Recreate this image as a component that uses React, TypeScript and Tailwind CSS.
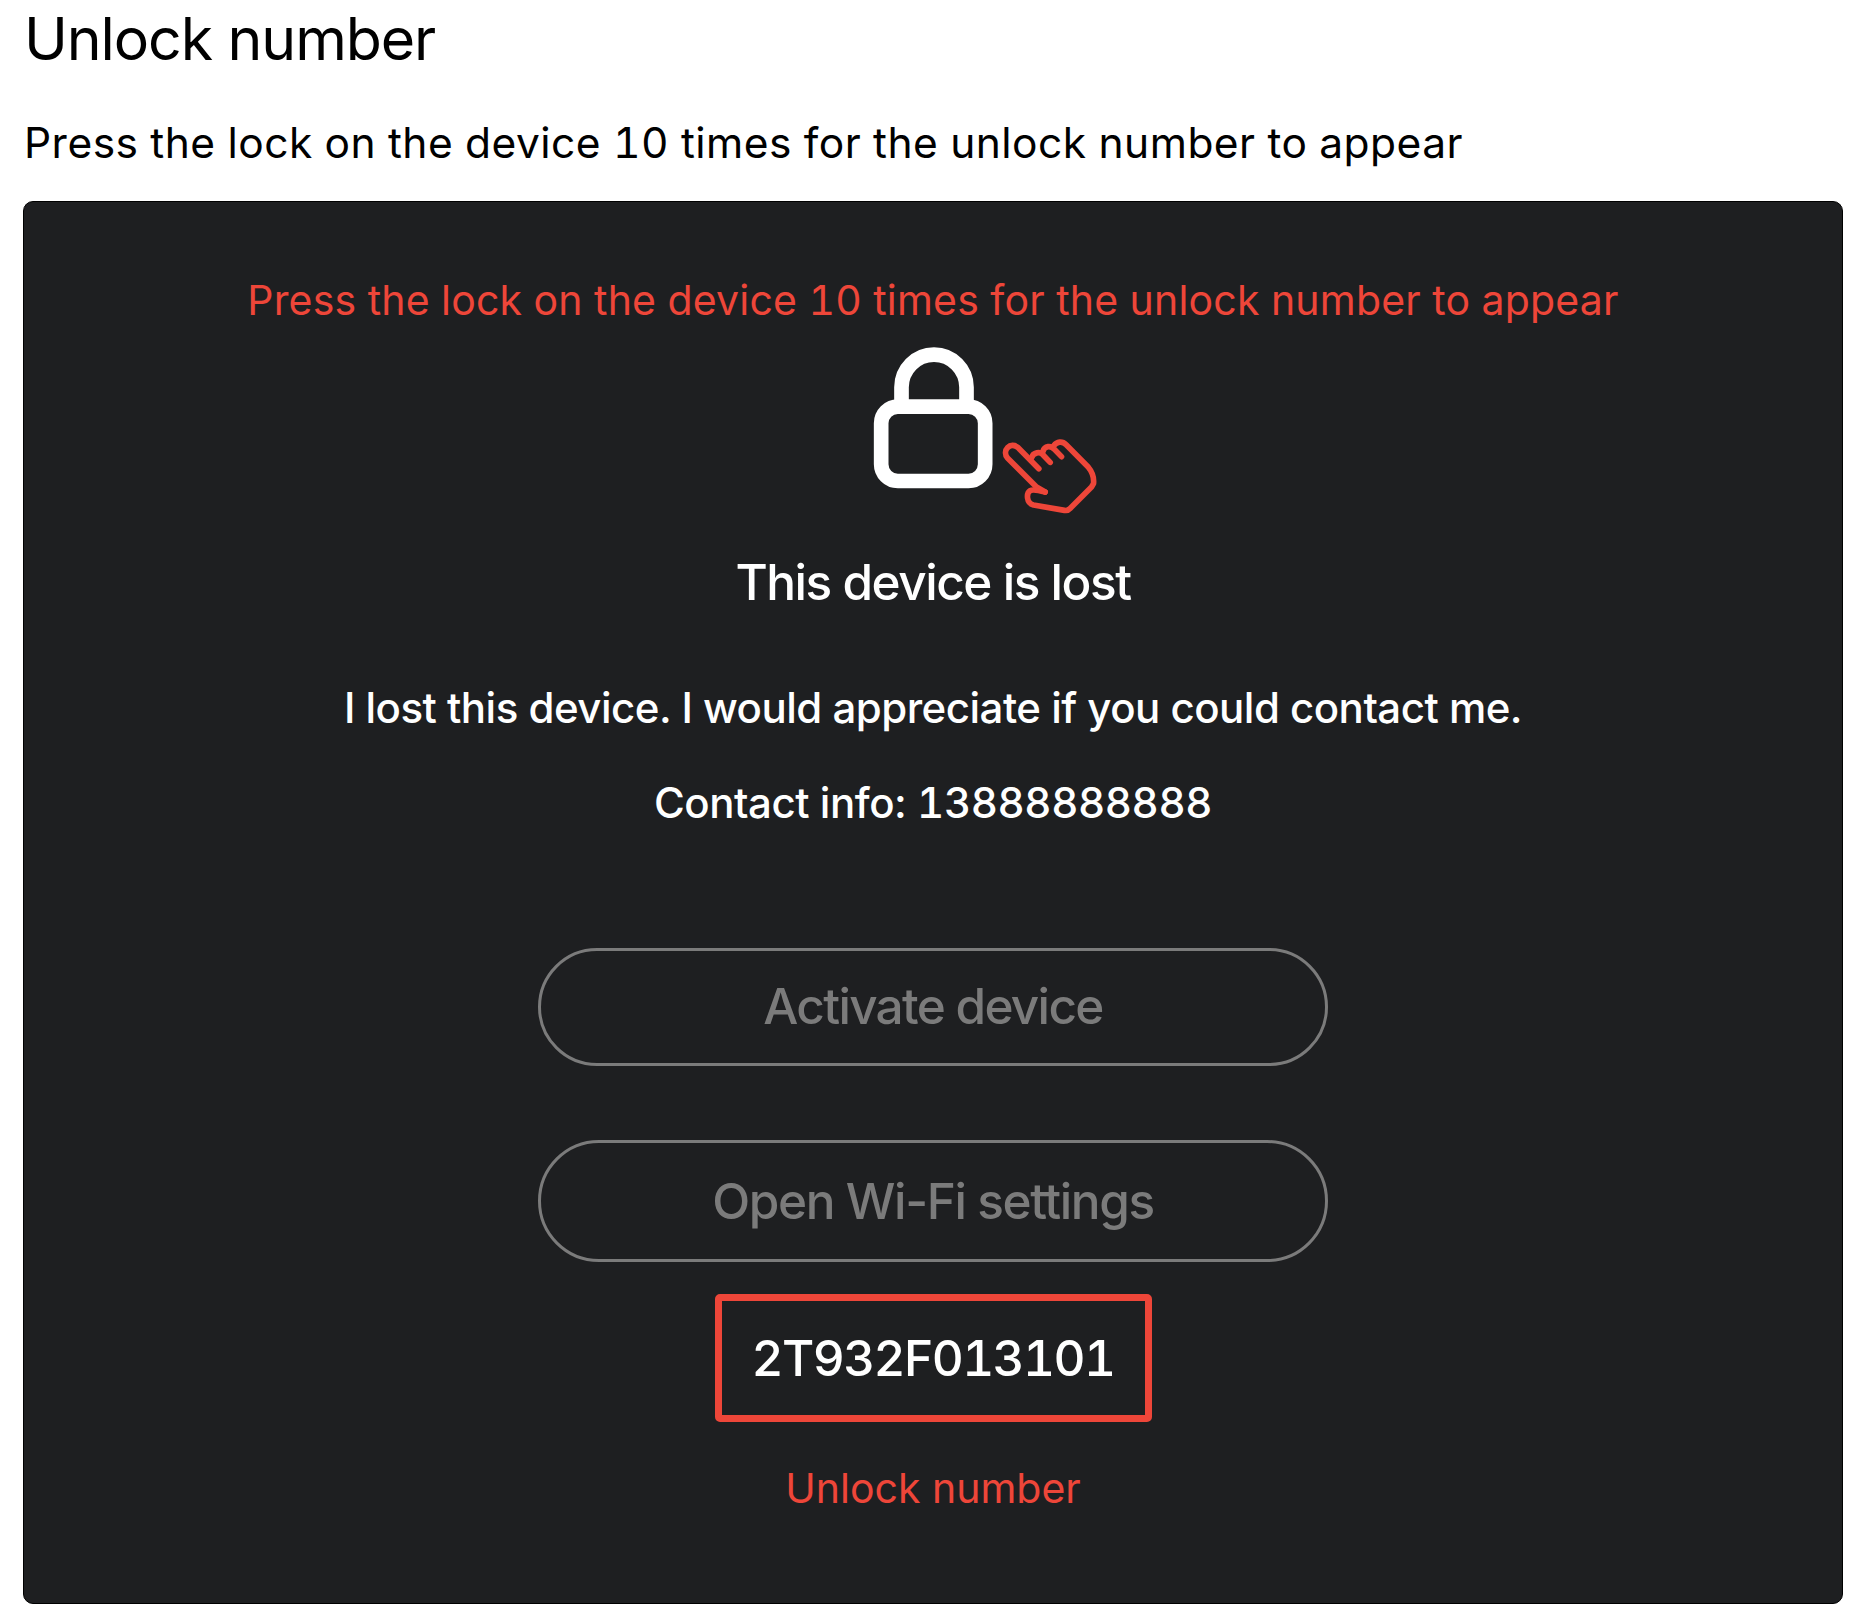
import { clsx } from 'clsx'

const HINT = 'Press the lock on the device 10 times for the unlock number to appear'

function LockWithPointer() {
  return (
    <svg
      className="mt-[6px] h-[190px] w-[334px] shrink-0"
      viewBox="-251.5 0 1002 570"
      fill="none"
      strokeLinecap="round"
      strokeLinejoin="round"
    >
      <g stroke="#fff" strokeWidth="44">
        <path d="M155 226V172A97.5 98 0 0 1 350 172V226" />
        <rect x="94" y="230" width="312" height="223" rx="50" />
      </g>
      <g stroke="#ee4639" strokeWidth="17">
        <path d="M586 486L560 471L473 384C455 362 482 333 505 353L567 416" />
        <path d="M545 384C550 366 571 364 580 375L601 397" />
        <path d="M579 365C584 346 604 346 614 358L635 380" />
        <path d="M612 347C621 335 637 332 649 344L715 411Q734 434 731 461L725 471L660 536Q654 543 644 541L551 525C529 519 529 490 541 482Q550 476 586 486" />
      </g>
    </svg>
  )
}

interface OutlineButtonProps {
  className?: string
  children: React.ReactNode
}

function OutlineButton({ className, children }: OutlineButtonProps) {
  return (
    <button
      className={clsx(
        'flex w-[790px] shrink-0 items-center justify-center rounded-full border-[3px] border-[#7b7b7b] text-[49.5px] leading-[56px] font-medium text-[#7b7b7b]',
        className,
      )}
    >
      {children}
    </button>
  )
}

export default function App() {
  return (
    <main className="flex h-[1614px] w-[1850px] flex-col overflow-hidden bg-white pt-[7px] pl-[23px] font-['Inter',sans-serif] whitespace-nowrap text-black">
      <h1 className="ml-px text-[59px] leading-[64px] tracking-[-1.08px]">Unlock number</h1>
      <p className="mt-12 ml-px text-[42.5px] leading-[48px] tracking-[0.47px] tabular-nums">
        {HINT}
      </p>

      <section className="mt-[34px] flex h-[1403px] w-[1820px] shrink-0 flex-col items-center rounded-[10px] border border-black bg-[#1e1f21] pt-[74px] text-white">
        <p className="text-[41px] leading-[48px] tracking-[0.21px] text-[#ee4639] tabular-nums">
          {HINT}
        </p>
        <LockWithPointer />
        <h2 className="mt-[34px] text-[49.5px] leading-[56px] font-medium tracking-[-1.47px]">
          This device is lost
        </h2>
        <p className="mt-[74px] text-[42px] leading-[48px] font-medium tracking-[-0.51px]">
          I lost this device. I would appreciate if you could contact me.
        </p>
        <p className="mt-[47px] text-[42px] leading-[48px] font-medium tracking-[-0.45px]">
          Contact info: <span className="tracking-[-0.4px] tabular-nums">13888888888</span>
        </p>

        <OutlineButton className="mt-[121px] h-[118px] pb-[2px] tracking-[-1.7px]">
          Activate device
        </OutlineButton>
        <OutlineButton className="mt-[74px] h-[122px] tracking-[-1.4px]">
          Open Wi-Fi settings
        </OutlineButton>

        <div className="mt-[32px] flex h-[128px] w-[437px] shrink-0 items-center justify-center rounded-[5px] border-[7px] border-[#ee4639] text-[49.5px] leading-[56px] font-medium tracking-[-1.6px] tabular-nums">
          2T932F013101
        </div>
        <p className="mt-[42px] text-[41px] leading-[48px] text-[#ee4639]">Unlock number</p>
      </section>
    </main>
  )
}
